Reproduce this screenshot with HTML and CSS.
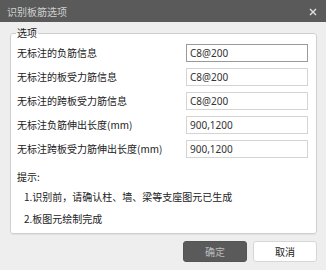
FILE: index.html
```html
<!DOCTYPE html>
<html lang="zh-CN">
<head>
    <meta charset="UTF-8">
    <title>识别板筋选项</title>
    <link rel="stylesheet" href="styles.css">
</head>
<body>
    <div class="dialog">
        <div class="titlebar">
            <span class="title">识别板筋选项</span>
            <svg class="close" width="8" height="8" viewBox="0 0 8 8">
                <path d="M1 1 L7 7 M7 1 L1 7" stroke="#e0e0e0" stroke-width="1.4" fill="none"/>
            </svg>
        </div>

        <div class="content">
            <fieldset class="group">
                <legend>选项</legend>
                <div class="rows">
                    <label>无标注的负筋信息</label>
                    <input type="text" class="focused" value="C8@200">
                    <label>无标注的板受力筋信息</label>
                    <input type="text" value="C8@200">
                    <label>无标注的跨板受力筋信息</label>
                    <input type="text" value="C8@200">
                    <label>无标注负筋伸出长度(mm)</label>
                    <input type="text" value="900,1200">
                    <label>无标注跨板受力筋伸出长度(mm)</label>
                    <input type="text" value="900,1200">
                </div>
                <div class="hint">
                    <div class="hint-title">提示:</div>
                    <div class="hint-line">1.识别前，请确认柱、墙、梁等支座图元已生成</div>
                    <div class="hint-line">2.板图元绘制完成</div>
                </div>
            </fieldset>

            <div class="buttons">
                <button class="btn primary">确定</button>
                <button class="btn">取消</button>
            </div>
        </div>
    </div>
</body>
</html>
```

FILE: styles.css
```css
body {
    margin: 0;
    font-family: "Noto Sans CJK SC", "Noto Sans", sans-serif;
    font-size: 10px;
    color: #222;
    background-color: #eeeeee;
}

.dialog {
    width: 326px;
    height: 270px;
    background-color: #eeeeee;
}

.titlebar {
    height: 22px;
    background-color: #5a5a5a;
    display: flex;
    align-items: center;
    justify-content: space-between;
    padding: 0 9px 0 7px;
    box-sizing: border-box;
}

.title {
    color: #cfcfcf;
    font-size: 10px;
    line-height: 14px;
    padding-top: 1px;
}

.close {
    margin-top: 1px;
}

.content {
    padding: 0 9px 0 10px;
}

.group {
    margin: 4px 0 0;
    padding: 0 7px 0 6px;
    border: 1px solid #cfcfcf;
    border-radius: 3px;
    background-color: #ffffff;
    height: 208px;
    box-sizing: border-box;
    box-shadow: 0 1px 1px rgba(0, 0, 0, 0.06);
}

.group legend {
    padding: 0 1px;
    margin-left: -1px;
    line-height: 14px;
    color: #222;
}

.rows {
    display: grid;
    grid-template-columns: 169px 122px;
    row-gap: 6px;
    margin-top: 4px;
    align-items: center;
}

.rows label {
    line-height: 14px;
}

.rows input {
    height: 18px;
    box-sizing: border-box;
    border: 1px solid #d4d4d4;
    padding: 0 0 0 3px;
    margin: 0;
    font-family: "Noto Sans", sans-serif;
    font-size: 10px;
    color: #333;
    background: #fff;
    outline: none;
}

.rows input.focused {
    border-color: #9a9a9a;
}

.hint {
    margin-top: 12px;
    line-height: 14px;
}

.hint-title {
    margin-bottom: 6px;
}

.hint-line {
    padding-left: 7px;
    margin-bottom: 8px;
}

.buttons {
    display: flex;
    justify-content: flex-end;
    gap: 6px;
    margin-top: 7px;
}

.btn {
    width: 64px;
    height: 21px;
    box-sizing: border-box;
    border: 1px solid #d6d6d6;
    border-radius: 3px;
    background-color: #ffffff;
    font-family: "Noto Sans CJK SC", sans-serif;
    font-size: 10px;
    color: #222;
    padding: 0;
}

.btn.primary {
    background-color: #5a5a5a;
    border-color: #555;
    color: #bdbdbd;
}
```
